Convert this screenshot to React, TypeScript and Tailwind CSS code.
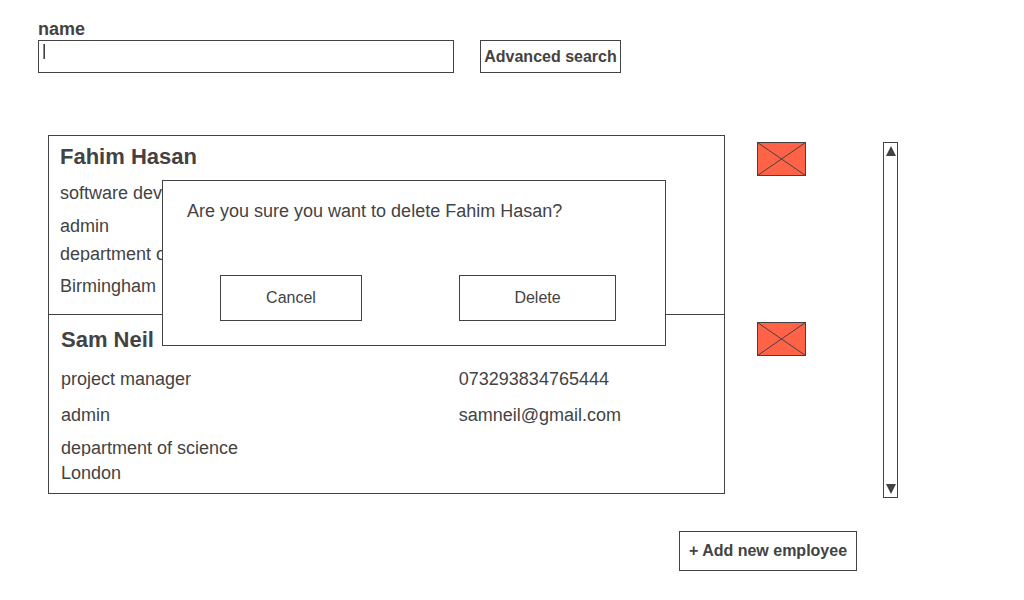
type Row = { text: string; detail?: string; className: string };
type Employee = { name: string; card: string; rows: Row[] };

const employees: Employee[] = [
  {
    name: "Fahim Hasan",
    card: "border pt-2 pb-[18px] pl-[11px]",
    rows: [
      { text: "software developer", className: "mt-3.5 h-5" },
      { text: "admin", className: "mt-[13px] h-5" },
      { text: "department of science", className: "mt-2 h-[18px]" },
      { text: "Birmingham", className: "mt-3.5 h-5" },
    ],
  },
  {
    name: "Sam Neil",
    card: "border-x border-b pt-3 pb-2.5 pl-3",
    rows: [
      { text: "project manager", detail: "073293834765444", className: "mt-[17px] h-5" },
      { text: "admin", detail: "samneil@gmail.com", className: "mt-4 h-5" },
      { text: "department of science", className: "mt-[13px] h-[18px]" },
      { text: "London", className: "mt-[7px] h-5" },
    ],
  },
];

function EmployeeItem({ employee }: { employee: Employee }) {
  return (
    <li className="flex items-start gap-8">
      <article className={`min-w-0 flex-1 border-[#434343] ${employee.card}`}>
        <h2 className="text-[22px] leading-[25px] font-bold">{employee.name}</h2>
        {employee.rows.map((row) => (
          <div
            key={row.text}
            className={`grid grid-cols-[3fr_2fr] overflow-hidden text-lg leading-5 ${row.className}`}
          >
            <p>{row.text}</p>
            {row.detail && <p>{row.detail}</p>}
          </div>
        ))}
      </article>
      <button type="button" aria-label={`Delete ${employee.name}`} className="mt-[7px] shrink-0">
        <svg width="49" height="34" viewBox="0 0 49 34" className="block">
          <rect x="0.5" y="0.5" width="48" height="33" fill="#ff6347" stroke="#434343" />
          <path d="M0.5 0.5 48.5 33.5M48.5 0.5 0.5 33.5" stroke="#434343" fill="none" />
        </svg>
      </button>
    </li>
  );
}

function DeleteDialog({ name }: { name: string }) {
  return (
    <div
      role="dialog"
      aria-labelledby="delete-question"
      className="absolute top-[45px] left-[114px] w-[504px] border border-[#434343] bg-white pt-5 pb-6"
    >
      <p id="delete-question" className="pl-6 text-lg leading-5">
        Are you sure you want to delete {name}?
      </p>
      <div className="mt-[54px] flex justify-between pr-[49px] pl-[57px]">
        <button type="button" className="h-[46px] w-[142px] border border-[#434343] text-base">
          Cancel
        </button>
        <button type="button" className="h-[46px] w-[157px] border border-[#434343] text-base">
          Delete
        </button>
      </div>
    </div>
  );
}

function Scroller() {
  return (
    <div className="mt-[7px] flex h-[356px] w-[15px] shrink-0 flex-col items-center justify-between border border-[#434343] py-[3px] pl-px">
      <button type="button" aria-label="Scroll up">
        <svg width="10" height="10" viewBox="0 0 10 10" className="block">
          <path d="M5 0 10 10H0z" fill="#434343" />
        </svg>
      </button>
      <button type="button" aria-label="Scroll down">
        <svg width="10" height="10" viewBox="0 0 10 10" className="block">
          <path d="M5 10 10 0H0z" fill="#434343" />
        </svg>
      </button>
    </div>
  );
}

export default function App() {
  return (
    <main className="flex min-h-screen flex-col bg-white pt-[18px] pr-[126px] pb-7 pl-[38px] font-['Liberation_Sans',Arial,sans-serif] text-[#434343]">
      <form className="flex items-end gap-[26px]">
        <div className="w-[416px]">
          <label htmlFor="name" className="block text-lg leading-[22px] font-bold">
            name
          </label>
          <div className="relative">
            <input
              id="name"
              type="text"
              className="block h-[33px] w-full border border-[#434343] px-1 text-lg outline-none"
            />
            <span className="absolute top-1 left-[5px] h-[15px] w-0.5 border-l border-[#8a8a8a] bg-[#434343]" />
          </div>
        </div>
        <button
          type="button"
          className="h-[33px] w-[141px] shrink-0 border border-[#434343] text-base font-bold whitespace-nowrap"
        >
          Advanced search
        </button>
      </form>

      <section className="mt-[62px] flex items-start gap-[77px] pl-2.5">
        <div className="relative min-w-0 flex-1">
          <ul>
            {employees.map((employee) => (
              <EmployeeItem key={employee.name} employee={employee} />
            ))}
          </ul>
          <DeleteDialog name="Fahim Hasan" />
        </div>
        <Scroller />
      </section>

      <button
        type="button"
        className="mt-[33px] mr-[41px] h-10 w-[178px] self-end border border-[#434343] text-base font-bold whitespace-nowrap"
      >
        + Add new employee
      </button>
    </main>
  );
}
